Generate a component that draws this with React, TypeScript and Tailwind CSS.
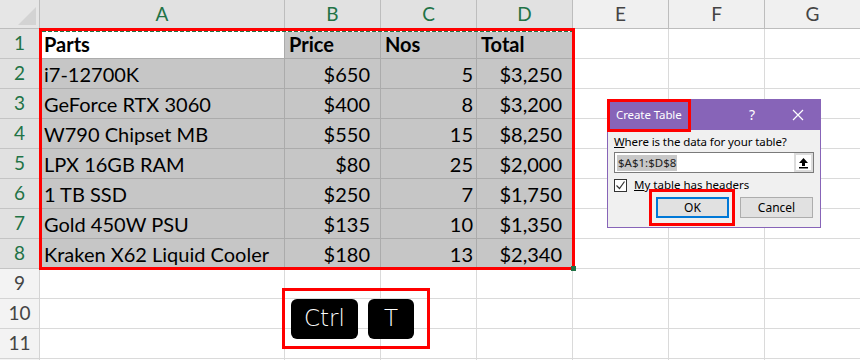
import React from 'react';

const rows = [
  ['i7-12700K', '$650', '5', '$3,250'],
  ['GeForce RTX 3060', '$400', '8', '$3,200'],
  ['W790 Chipset MB', '$550', '15', '$8,250'],
  ['LPX 16GB RAM', '$80', '25', '$2,000'],
  ['1 TB SSD', '$250', '7', '$1,750'],
  ['Gold 450W PSU', '$135', '10', '$1,350'],
  ['Kraken X62 Liquid Cooler', '$180', '13', '$2,340'],
];

const cols = ['A', 'B', 'C', 'D', 'E', 'F', 'G'];

const cellFont = { fontFamily: 'Lato, "Noto Sans", sans-serif' };
const uiFont = { fontFamily: '"Noto Sans", "Open Sans", sans-serif' };

const Empty: React.FC = () => <div className="border-r border-b border-[#dadada] bg-white" />;

const RowHead: React.FC<{ n: number; label?: boolean }> = ({ n, label = true }) => {
  const sel = n <= 8;
  return (
    <div
      className={`flex items-center justify-center border-r border-b text-[19px] ${
        sel ? 'bg-[#e1e1e1] text-[#217346] border-[#c4c4c4]' : 'bg-[#f3f3f3] text-[#444] border-[#d4d4d4]'
      }`}
    >
      {label ? n : null}
    </div>
  );
};

const App: React.FC = () => {
  return (
    <div className="relative w-[860px] h-[360px] overflow-hidden bg-white text-black" style={cellFont}>
      <div className="grid grid-cols-[40px_245px_96px_96px_96px_96px_96px_96px] grid-rows-[29px_repeat(12,30px)]">
        {/* corner */}
        <div className="relative border-r border-b border-[#bdbdbd] bg-[#e6e6e6]">
          <svg className="absolute right-[3px] bottom-[3px]" width="18" height="18" viewBox="0 0 18 18">
            <polygon points="18,0 18,18 0,18" fill="#d3d3d3" />
          </svg>
        </div>
        {cols.map((c, i) => (
          <div
            key={c}
            className={`flex items-center justify-center border-r border-b text-[19px] ${
              i < 4 ? 'bg-[#e1e1e1] text-[#217346] border-[#bdbdbd]' : 'bg-[#f0f0f0] text-[#444] border-[#bdbdbd]'
            }`}
          >
            {c}
          </div>
        ))}

        {/* header row */}
        <RowHead n={1} />
        <div className="flex items-center px-1 border-r border-b border-[#ababab] bg-white font-bold text-[20px]">Parts</div>
        <div className="flex items-center px-1 border-r border-b border-[#ababab] bg-[#c6c6c6] font-bold text-[20px]">Price</div>
        <div className="flex items-center px-1 border-r border-b border-[#ababab] bg-[#c6c6c6] font-bold text-[20px]">Nos</div>
        <div className="flex items-center px-1 border-r border-b border-[#ababab] bg-[#c6c6c6] font-bold text-[20px]">Total</div>
        <Empty />
        <Empty />
        <Empty />

        {rows.map((r, i) => (
          <React.Fragment key={r[0]}>
            <RowHead n={i + 2} />
            <div className="flex items-center px-1 border-r border-b border-[#ababab] bg-[#c6c6c6] text-[20px]">{r[0]}</div>
            <div className="flex items-center justify-end pr-[10px] border-r border-b border-[#ababab] bg-[#c6c6c6] text-[20px]">{r[1]}</div>
            <div className="flex items-center justify-end pr-[3px] border-r border-b border-[#ababab] bg-[#c6c6c6] text-[20px]">{r[2]}</div>
            <div className="flex items-center justify-end pr-[10px] border-r border-b border-[#ababab] bg-[#c6c6c6] text-[20px]">{r[3]}</div>
            <Empty />
            <Empty />
            <Empty />
          </React.Fragment>
        ))}

        {[9, 10, 11, 12].map((n) => (
          <React.Fragment key={n}>
            <RowHead n={n} label={n < 12} />
            {cols.map((c) => (
              <Empty key={c} />
            ))}
          </React.Fragment>
        ))}
      </div>

      {/* copy marquee */}
      <div className="absolute left-[42px] top-[30px] w-[530px] h-[2px] bg-[repeating-linear-gradient(90deg,#217346_0_4px,#ffffff_4px_6px)]" />
      {/* selection highlight */}
      <div className="absolute left-[39px] top-[28px] w-[536px] h-[242px] border-[3px] border-[#ff0000]" />
      <div className="absolute left-[571px] top-[266px] w-[5px] h-[5px] bg-[#217346]" />

      {/* Ctrl + T */}
      <div className="absolute left-[282px] top-[288px] w-[148px] h-[61px] border-[3px] border-[#ff0000] flex items-center gap-[10px] pl-[6px]">
        <div className="w-[67px] h-[40px] rounded-[6px] bg-black text-white flex items-center justify-center text-[23px] font-light" style={{ fontFamily: '"DejaVu Sans", sans-serif' }}>
          Ctrl
        </div>
        <div className="w-[46px] h-[40px] rounded-[6px] bg-black text-white flex items-center justify-center text-[23px] font-light" style={{ fontFamily: '"DejaVu Sans", sans-serif' }}>
          T
        </div>
      </div>

      {/* Create Table dialog */}
      <div className="absolute left-[607px] top-[99px] w-[214px] h-[129px] border border-[#8764b8] bg-[#f0f0f0] flex flex-col" style={uiFont}>
        <div className="h-[31px] bg-[#8764b8] text-white flex items-center -mx-px -mt-px">
          <span className="pl-[9px] text-[11.5px] tracking-[-0.1px] flex-1">Create Table</span>
          <span className="w-[46px] text-center text-[14px]">?</span>
          <span className="w-[46px] flex justify-center">
            <svg width="12" height="12" viewBox="0 0 12 12" stroke="white" strokeWidth="1.2">
              <path d="M1 1L11 11M11 1L1 11" />
            </svg>
          </span>
        </div>
        <div className="px-[6px] pt-[3px] text-[11.5px] text-black">
          <div className="leading-[17px] tracking-[-0.1px]">
            <span className="underline">W</span>here is the data for your table?
          </div>
          <div className="mt-[2px] h-[21px] border border-[#7a7a7a] bg-white flex items-center justify-between pl-[2px]">
            <span className="bg-[#c8c8c8] text-[#222] leading-[16px] px-px">$A$1:$D$8</span>
            <span className="h-[19px] w-[19px] bg-[#dcdcdc] flex items-center justify-center">
              <span className="w-[15px] h-[15px] bg-white flex items-center justify-center">
                <svg width="11" height="12" viewBox="0 0 11 12">
                  <path d="M5.5 1L1 6h3v3h3V6h3z" fill="black" />
                  <rect x="1" y="10" width="9" height="1.5" fill="black" />
                </svg>
              </span>
            </span>
          </div>
          <div className="mt-[5px] flex items-center gap-[7px]">
            <span className="w-[13px] h-[13px] border border-[#333] bg-white flex items-center justify-center">
              <svg width="11" height="11" viewBox="0 0 11 11" fill="none" stroke="#333" strokeWidth="1.2">
                <path d="M1.5 5.5l3 3l5-7" />
              </svg>
            </span>
            <span className="leading-[14px]">
              <span className="underline">M</span>y table has headers
            </span>
          </div>
          <div className="mt-[5px] flex justify-end gap-[11px] pr-px">
            <button className="w-[73px] h-[21px] border-2 border-[#0078d7] bg-[#e1e1e1] text-[12px] leading-none">OK</button>
            <button className="w-[73px] h-[21px] border border-[#adadad] bg-[#e1e1e1] text-[12px] leading-none">Cancel</button>
          </div>
        </div>
      </div>
      <div className="absolute left-[607px] top-[99px] w-[84px] h-[33px] border-[3px] border-[#ff0000]" />
      <div className="absolute left-[649px] top-[189px] w-[86px] h-[37px] border-[3px] border-[#ff0000]" />
    </div>
  );
};

export default App;
